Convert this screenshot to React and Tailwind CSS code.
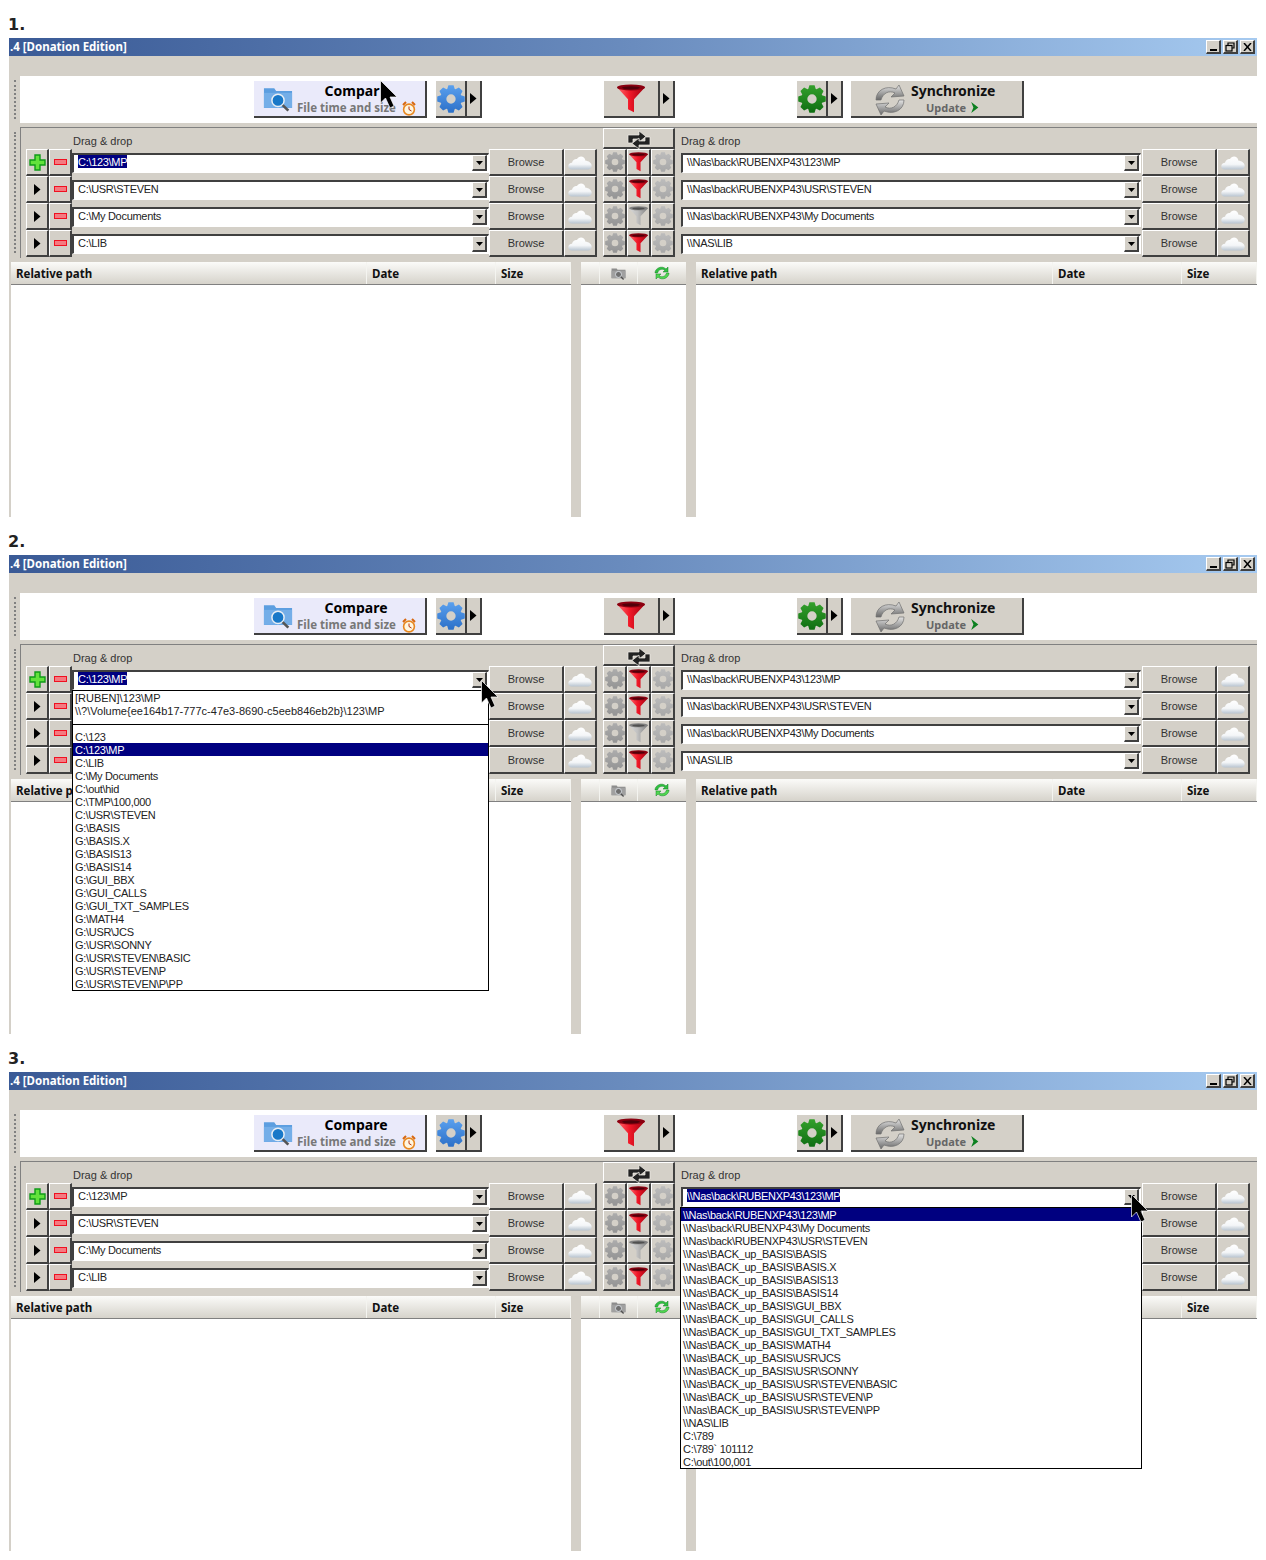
const ui = { fontFamily: '"Liberation Sans", sans-serif' };
const heavy = { fontFamily: '"Noto Sans", sans-serif' };

const bevel = "bg-[#d4d0c8] border-t border-l border-t-white border-l-white border-r-2 border-b-2 border-r-[#404040] border-b-[#404040] flex items-center justify-center shrink-0";
const toolBevel = "bg-[#d4d0c8] border-r-2 border-b-2 border-r-[#404040] border-b-[#404040] flex items-center justify-center shrink-0";

const gearPath = (() => {
    let d = "";
    const teeth = 8;
    for (let i = 0; i < teeth; i++) {
        const a = (i / teeth) * Math.PI * 2;
        const s = Math.PI / 11;
        const pts = [
            [9.2, a - s * 1.25],
            [12, a - s * 0.65],
            [12, a + s * 0.65],
            [9.2, a + s * 1.25],
        ];
        pts.forEach(([r, t], j) => {
            const x = (12 + r * Math.cos(t)).toFixed(2);
            const y = (12 + r * Math.sin(t)).toFixed(2);
            d += `${i === 0 && j === 0 ? "M" : "L"}${x} ${y} `;
        });
    }
    return d + "Z M12 8 A4 4 0 1 0 12 16 A4 4 0 1 0 12 8 Z";
})();

const Gear = ({ size, from, to }) => {
    const id = `gear-${from.slice(1)}`;
    return (
        <svg width={size} height={size} viewBox="0 0 24 24">
            <defs>
                <linearGradient id={id} x1="0" y1="0" x2="0" y2="1">
                    <stop offset="0" stopColor={from} />
                    <stop offset="1" stopColor={to} />
                </linearGradient>
            </defs>
            <path d={gearPath} fill={`url(#${id})`} fillRule="evenodd" />
        </svg>
    );
};

const Funnel = ({ size, gray }) => {
    const id = gray ? "funnel-gray" : "funnel-red";
    return (
        <svg width={size} height={size * 1.05} viewBox="0 0 28 29">
            <defs>
                <linearGradient id={id} x1="0" y1="0" x2="1" y2="0">
                    <stop offset="0" stopColor={gray ? "#d8d8d8" : "#ff6a70"} />
                    <stop offset="0.45" stopColor={gray ? "#c0c0c0" : "#f01828"} />
                    <stop offset="1" stopColor={gray ? "#808080" : "#a00010"} />
                </linearGradient>
            </defs>
            <path d="M0 3 L11 15 L11 25 L17 28 L17 15 L28 3 Z" fill={`url(#${id})`} />
            <ellipse cx="14" cy="3.2" rx="14" ry="3" fill={gray ? "#808080" : "#8a0010"} />
            <ellipse cx="14" cy="3.6" rx="9" ry="1.6" fill={gray ? "#505050" : "#50000a"} />
        </svg>
    );
};

const Cloud = () => (
    <svg width="24" height="16" viewBox="0 0 24 16">
        <defs>
            <linearGradient id="cloud-fill" x1="0" y1="0" x2="0" y2="1">
                <stop offset="0" stopColor="#ffffff" />
                <stop offset="0.6" stopColor="#f4f6f8" />
                <stop offset="1" stopColor="#b8c4d0" />
            </linearGradient>
        </defs>
        <path d="M4 15.5 C1.5 15.5 0.3 14 0.3 12 C0.3 10 2 8.7 4 8.7 C4.8 5.8 7 4.6 9 5 C10.5 1.8 16.5 1.2 17.5 6.8 C20.5 6.8 23.7 9 23.7 11.8 C23.7 14 22 15.5 20 15.5 Z" fill="url(#cloud-fill)" />
    </svg>
);

const Triangle = () => (
    <svg width="7" height="11" viewBox="0 0 7 11"><path d="M0 0 L6.5 5.5 L0 11 Z" fill="#000" /></svg>
);

const Plus = () => (
    <svg width="17" height="17" viewBox="0 0 17 17">
        <path d="M6 1 H11 V6 H16 V11 H11 V16 H6 V11 H1 V6 H6 Z" fill="#62e23c" stroke="#0f9a18" strokeWidth="1.4" />
    </svg>
);

const Minus = () => (
    <svg width="13" height="6" viewBox="0 0 13 6">
        <rect x="0.5" y="0.5" width="12" height="5" fill="#f47a80" stroke="#f01020" />
    </svg>
);

const FolderSearch = ({ w, h, gray }) => (
    <svg width={w} height={h} viewBox="0 0 32 28">
        <path d="M1 3 H12 L14 6 H31 V24 H1 Z" fill={gray ? "#8c8c8c" : "#5c9ee0"} />
        <rect x="1" y="8" width="30" height="16" fill={gray ? "#a0a0a0" : "#74aee8"} />
        <circle cx="16" cy="16" r="6.5" fill={gray ? "#707070" : "#1878c8"} stroke="#e8eef4" strokeWidth="1.6" />
        <path d="M21 21 L27 27" stroke={gray ? "#505050" : "#555"} strokeWidth="2.8" />
    </svg>
);

const AlarmClock = () => (
    <svg width="14" height="15" viewBox="0 0 14 15">
        <circle cx="7" cy="8.5" r="5.4" fill="#fff6e0" stroke="#e88820" strokeWidth="1.6" />
        <path d="M1 4 L4 1 M13 4 L10 1" stroke="#d86810" strokeWidth="2" />
        <path d="M7 5.5 V8.5 L9.5 10" stroke="#b03010" strokeWidth="1" fill="none" />
    </svg>
);

const SyncIcon = () => (
    <svg width="30" height="32" viewBox="0 0 30 32">
        <defs>
            <linearGradient id="sync-fill" x1="0" y1="0" x2="0" y2="1">
                <stop offset="0" stopColor="#e4e4e4" />
                <stop offset="1" stopColor="#686868" />
            </linearGradient>
        </defs>
        <path d="M1 16 C1 6 11 1 21 5 L24 1 L29 12 L16 13 L20 9 C14 6 8 9 6 16 Z" fill="url(#sync-fill)" stroke="#707070" strokeWidth="0.7" />
        <path d="M29 16 C29 26 19 31 9 27 L6 31 L1 20 L14 19 L10 23 C16 26 22 23 24 16 Z" fill="url(#sync-fill)" stroke="#707070" strokeWidth="0.7" />
    </svg>
);

const SwapIcon = () => (
    <svg width="24" height="18" viewBox="0 0 24 18">
        <path d="M1 12 V4 H12 V0 L19 5.5 L12 11 V8 H6 V12 Z" fill="#222" stroke="#f0eee8" strokeWidth="0.7" />
        <path d="M23 6 V14 H12 V18 L5 12.5 L12 7 V10 H18 V6 Z" fill="#222" stroke="#f0eee8" strokeWidth="0.7" />
    </svg>
);

const RefreshGreen = () => (
    <svg width="16" height="14" viewBox="0 0 16 14">
        <path d="M1 7 C1 2 8 -1 12 3 L14 1 V6 H9 L11 4.3 C8 2 4 4 3.5 7 Z" fill="#30c040" stroke="#108020" strokeWidth="0.5" />
        <path d="M15 7 C15 12 8 15 4 11 L2 13 V8 H7 L5 9.7 C8 12 12 10 12.5 7 Z" fill="#50d850" stroke="#108020" strokeWidth="0.5" />
    </svg>
);

const Cursor = ({ className }) => (
    <svg className={`absolute z-30 pointer-events-none ${className}`} width="18" height="29" viewBox="0 0 18 29">
        <path d="M0.5 0.5 L0.5 23 L5.5 18 L10 28 L14 26 L10 17 L17 17 Z" fill="#000" stroke="#fff" strokeWidth="0.7" />
    </svg>
);

const Gripper = ({ className }) => (
    <div className={`w-[11px] shrink-0 flex justify-start pl-[5px] ${className}`}>
        <div className="w-0 h-full border-l-2 border-dotted border-[#808080]" />
    </div>
);

const leftPaths = ["C:\\123\\MP", "C:\\USR\\STEVEN", "C:\\My Documents", "C:\\LIB"];
const rightPaths = ["\\\\Nas\\back\\RUBENXP43\\123\\MP", "\\\\Nas\\back\\RUBENXP43\\USR\\STEVEN", "\\\\Nas\\back\\RUBENXP43\\My Documents", "\\\\NAS\\LIB"];

const leftList = ["C:\\123", "C:\\123\\MP", "C:\\LIB", "C:\\My Documents", "C:\\out\\hid", "C:\\TMP\\100,000", "C:\\USR\\STEVEN", "G:\\BASIS", "G:\\BASIS.X", "G:\\BASIS13", "G:\\BASIS14", "G:\\GUI_BBX", "G:\\GUI_CALLS", "G:\\GUI_TXT_SAMPLES", "G:\\MATH4", "G:\\USR\\JCS", "G:\\USR\\SONNY", "G:\\USR\\STEVEN\\BASIC", "G:\\USR\\STEVEN\\P", "G:\\USR\\STEVEN\\P\\PP"];
const rightList = ["\\\\Nas\\back\\RUBENXP43\\123\\MP", "\\\\Nas\\back\\RUBENXP43\\My Documents", "\\\\Nas\\back\\RUBENXP43\\USR\\STEVEN", "\\\\Nas\\BACK_up_BASIS\\BASIS", "\\\\Nas\\BACK_up_BASIS\\BASIS.X", "\\\\Nas\\BACK_up_BASIS\\BASIS13", "\\\\Nas\\BACK_up_BASIS\\BASIS14", "\\\\Nas\\BACK_up_BASIS\\GUI_BBX", "\\\\Nas\\BACK_up_BASIS\\GUI_CALLS", "\\\\Nas\\BACK_up_BASIS\\GUI_TXT_SAMPLES", "\\\\Nas\\BACK_up_BASIS\\MATH4", "\\\\Nas\\BACK_up_BASIS\\USR\\JCS", "\\\\Nas\\BACK_up_BASIS\\USR\\SONNY", "\\\\Nas\\BACK_up_BASIS\\USR\\STEVEN\\BASIC", "\\\\Nas\\BACK_up_BASIS\\USR\\STEVEN\\P", "\\\\Nas\\BACK_up_BASIS\\USR\\STEVEN\\PP", "\\\\NAS\\LIB", "C:\\789", "C:\\789` 101112", "C:\\out\\100,001"];

const ListItem = ({ text, active, head }) => (
    <div className={`h-[13px] whitespace-nowrap pl-[2px] ${head ? "leading-[13px]" : "leading-[15px] tracking-[-0.3px]"} ${active ? "bg-[#000080] text-white" : "text-[#222]"}`}>{text}</div>
);

const LeftDropdown = () => (
    <div className="absolute z-20 -left-[2px] top-[18px] w-[417px] h-[301px] bg-white border border-black text-[11px]">
        <div className="pt-[1px]">
            <ListItem text="[RUBEN]\123\MP" head />
            <ListItem text="\\?\Volume{ee164b17-777c-47e3-8690-c5eeb846eb2b}\123\MP" head />
        </div>
        <div className="mt-[6px] mb-[5px] border-t border-black" />
        {leftList.map(t => <ListItem key={t} text={t} active={t === "C:\\123\\MP"} />)}
    </div>
);

const RightDropdown = () => (
    <div className="absolute z-20 -left-[3px] top-[18px] w-[462px] h-[262px] bg-white border border-black text-[11px]">
        {rightList.map((t, i) => <ListItem key={t} text={t} active={i === 0} />)}
    </div>
);

const Combo = ({ text, selected, className, children }) => (
    <div className={`relative h-[20px] mt-[4px] bg-white border-t-2 border-l-2 border-t-[#404040] border-l-[#404040] border-b border-r border-b-white border-r-white flex items-start ${className}`}>
        <span className={`ml-[4px] h-[13px] text-[11px] leading-[15px] tracking-[-0.3px] whitespace-nowrap ${selected ? "bg-[#000080] text-white" : "text-[#222]"}`}>{text}</span>
        <div className={`${bevel} ml-auto mr-[1px] w-[15px] h-[16px]`}>
            <svg width="7" height="4" viewBox="0 0 7 4"><path d="M0 0 H7 L3.5 4 Z" fill="#000" /></svg>
        </div>
        {children}
    </div>
);

const FolderPanel = ({ open }) => (
    <div className="flex-1 h-[131px] border-t border-l border-[#808080] pl-[5px] flex gap-[6px] text-[#333]">
        <div className="w-[571px] shrink-0">
            <div className="h-[21px] pl-[47px] pt-[6px] text-[11px] leading-[14px]">Drag &amp; drop</div>
            {leftPaths.map((p, i) => (
                <div key={p} className="flex h-[27px]">
                    <div className={`${bevel} w-[23px]`}>{i === 0 ? <Plus /> : <Triangle />}</div>
                    <div className={`${bevel} w-[23px]`}><Minus /></div>
                    <Combo text={p} selected={i === 0 && open !== "right"} className="flex-1">
                        {i === 0 && open === "left" && <LeftDropdown />}
                    </Combo>
                    <div className={`${bevel} w-[75px] text-[11px]`}>Browse</div>
                    <div className={`${bevel} w-[33px]`}><Cloud /></div>
                </div>
            ))}
        </div>
        <div className="w-[72px] shrink-0">
            <div className={`${bevel} w-full h-[21px] pt-[3px]`}><SwapIcon /></div>
            {[0, 1, 2, 3].map(i => (
                <div key={i} className="flex h-[27px]">
                    <div className={`${bevel} flex-1`}><Gear size={20} from="#acacac" to="#949494" /></div>
                    <div className={`${bevel} flex-1`}><Funnel size={19} gray={i === 2} /></div>
                    <div className={`${bevel} flex-1`}><Gear size={20} from="#bcbcbc" to="#a8a8a8" /></div>
                </div>
            ))}
        </div>
        <div className="w-[569px] shrink-0">
            <div className="h-[21px] pt-[6px] text-[11px] leading-[14px]">Drag &amp; drop</div>
            {rightPaths.map((p, i) => (
                <div key={p} className="flex h-[27px]">
                    <Combo text={p} selected={i === 0 && open === "right"} className="w-[461px]">
                        {i === 0 && open === "right" && <RightDropdown />}
                    </Combo>
                    <div className={`${bevel} w-[75px] text-[11px] ml-[1px]`}>Browse</div>
                    <div className={`${bevel} w-[33px]`}><Cloud /></div>
                </div>
            ))}
        </div>
    </div>
);

const headCell = "h-full flex items-center pl-[5px] pt-[2px] text-[11.5px] font-bold text-[#111] border-r border-r-[#f4f4f0] shrink-0";
const headRow = "h-[23px] flex bg-linear-to-b from-[#fbfbf9] to-[#d6d3cb] border-b border-[#808080]";

const FileColumn = ({ widths }) => (
    <div className="flex-1 flex flex-col bg-white">
        <div className={headRow} style={heavy}>
            <div className={`${headCell} ${widths[0]}`}>Relative path</div>
            <div className={`${headCell} ${widths[1]}`}>Date</div>
            <div className={`${headCell} flex-1`}>Size</div>
        </div>
    </div>
);

const Toolbar = ({ hideE }) => (
    <div className="flex h-[47px] mb-[4px]">
        <Gripper className="py-[4px]" />
        <div className="flex-1 bg-white flex items-start pt-[5px] h-[47px]">
            <div className={`${toolBevel} !bg-[#eaeafa] ml-[234px] w-[173px] h-[37px] relative`}>
                <div className="absolute left-[9px] top-[4px]"><FolderSearch w={30} h={27} /></div>
                <div className="absolute left-[148px] top-[20px]"><AlarmClock /></div>
                <div className="absolute left-0 right-0 top-[1px] text-center" style={heavy}>
                    <div className="text-[14px] leading-[17px] font-bold text-black pl-[33px]">
                        Compar<span className={hideE ? "text-transparent" : ""}>e</span>
                    </div>
                    <div className="text-[11.5px] leading-[17px] font-bold text-[#777] pl-[14px]">File time and size</div>
                </div>
            </div>
            <div className={`${toolBevel} ml-[9px] w-[31px] h-[37px]`}><Gear size={28} from="#5aa0ee" to="#2c70c8" /></div>
            <div className={`${toolBevel} w-[15px] h-[37px]`}><Triangle /></div>
            <div className={`${toolBevel} ml-[122px] w-[56px] h-[37px]`}><Funnel size={28} /></div>
            <div className={`${toolBevel} w-[15px] h-[37px]`}><Triangle /></div>
            <div className={`${toolBevel} ml-[122px] w-[31px] h-[37px]`}><Gear size={28} from="#34a02c" to="#0e6e12" /></div>
            <div className={`${toolBevel} w-[15px] h-[37px]`}><Triangle /></div>
            <div className={`${toolBevel} ml-[8px] w-[173px] h-[37px] relative`}>
                <div className="absolute left-[24px] top-[3px]"><SyncIcon /></div>
                <div className="absolute left-[60px] top-[1px]" style={heavy}>
                    <div className="text-[14px] leading-[17px] font-bold text-[#111]">Synchronize</div>
                    <div className="text-[11px] leading-[17px] font-bold text-[#666] pl-[15px] flex items-center gap-[4px]">
                        Update
                        <svg width="9" height="11" viewBox="0 0 8 10"><path d="M1 0 L7.5 5 L1 10 L3 5 Z" fill="#0c8020" /></svg>
                    </div>
                </div>
            </div>
        </div>
    </div>
);

const Screen = ({ number, open, cursor }) => (
    <section className="relative h-[517px] pt-[14px]">
        <div className="h-[24px] pl-[8px] pt-[1px] text-[16px] leading-[20px] font-bold text-[#222]" style={{ fontFamily: '"DejaVu Sans", sans-serif' }}>{number}.</div>
        <div className="relative ml-[9px] w-[1248px] h-[479px] bg-[#d4d0c8] flex flex-col" style={ui}>
            <div className="h-[18px] shrink-0 flex items-center bg-linear-to-r from-[#3a5a96] via-[#6a8cbe] to-[#a6caf0] pl-[1px] pr-[2px]">
                <span className="text-[11.5px] font-bold text-white" style={heavy}>.4 [Donation Edition]</span>
                <div className="ml-auto flex gap-[2px]">
                    <div className={`${bevel} w-[15px] h-[14px]`}><div className="w-[7px] h-[2px] bg-black mt-[6px]" /></div>
                    <div className={`${bevel} w-[15px] h-[14px]`}>
                        <svg width="10" height="10" viewBox="0 0 10 10" fill="none" stroke="#000"><path d="M3 3 V1 H9 V6 H7" strokeWidth="1.2" /><rect x="1" y="3.5" width="6" height="5.5" strokeWidth="1.2" /></svg>
                    </div>
                    <div className={`${bevel} w-[15px] h-[14px]`}>
                        <svg width="9" height="8" viewBox="0 0 9 8" stroke="#000" strokeWidth="1.5"><path d="M1 0 L8 8 M8 0 L1 8" /></svg>
                    </div>
                </div>
            </div>
            <div className="h-[20px] shrink-0" />
            <Toolbar hideE={number === 1} />
            <div className="flex">
                <Gripper className="py-[5px] h-[131px]" />
                <FolderPanel open={open} />
            </div>
            <div className="flex-1 mt-[4px] ml-[2px] flex min-h-0">
                <div className="w-[560px] shrink-0 flex">
                    <FileColumn widths={["w-[356px]", "w-[129px]"]} />
                </div>
                <div className="w-[10px] shrink-0" />
                <div className="w-[105px] shrink-0 flex flex-col bg-white">
                    <div className={headRow}>
                        <div className="w-[19px] h-full border-r border-r-[#f4f4f0]" />
                        <div className="w-[38px] h-full border-r border-r-[#f4f4f0] flex items-center justify-center"><FolderSearch w={15} h={13} gray /></div>
                        <div className="flex-1 h-full flex items-center justify-center"><RefreshGreen /></div>
                    </div>
                </div>
                <div className="w-[10px] shrink-0" />
                <div className="flex-1 flex">
                    <FileColumn widths={["w-[357px]", "w-[129px]"]} />
                </div>
            </div>
        </div>
        <Cursor className={cursor} />
    </section>
);

const App = () => {
    return (
        <div className="w-[1266px] h-[1560px] bg-white overflow-hidden">
            <Screen number={1} cursor="left-[380px] top-[80px]" />
            <Screen number={2} open="left" cursor="left-[481px] top-[163px]" />
            <Screen number={3} open="right" cursor="left-[1131px] top-[160px]" />
        </div>
    );
};

export default App;
